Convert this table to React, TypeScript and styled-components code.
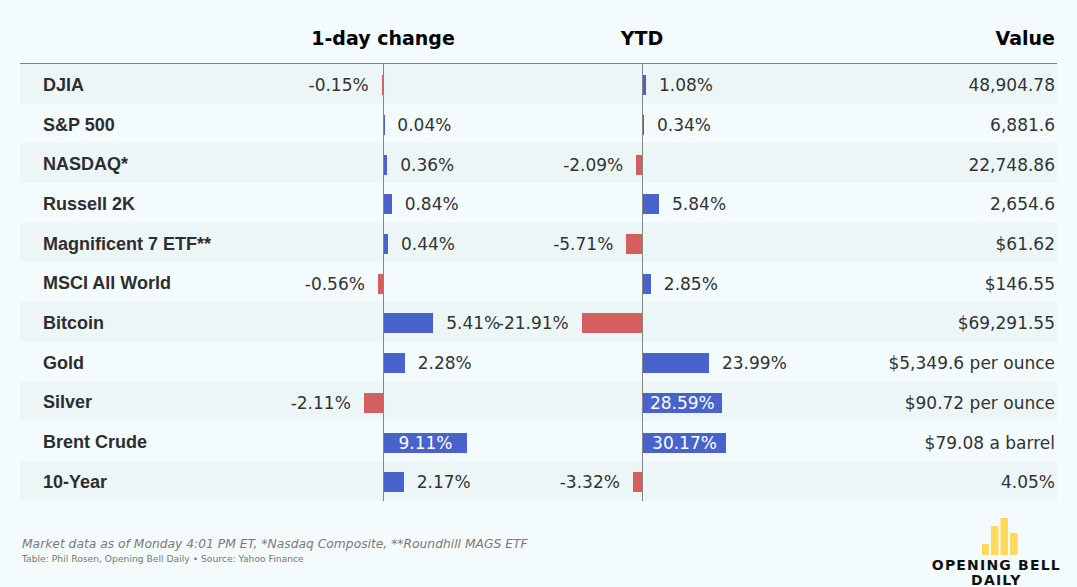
import React from "react";
import styled, { createGlobalStyle } from "styled-components";

const GlobalStyle = createGlobalStyle`
  html, body {
    margin: 0;
    padding: 0;
    background: #f3fbfd;
  }
`;

const COLS = "210px 153px 153px 106px 106px 1fr";
const DAY_SCALE = 9.1;
const YTD_SCALE = 2.75;

const Page = styled.div`
  width: 1077px;
  height: 587px;
  box-sizing: border-box;
  padding: 0 20px;
  overflow: hidden;
`;

const Table = styled.div`
  display: flex;
  flex-direction: column;
`;

const HeaderRow = styled.div`
  display: grid;
  grid-template-columns: ${COLS};
  align-items: center;
  height: 64px;
  box-sizing: border-box;
  padding-top: 12px;
  border-bottom: 1px solid #7e7e7e;
  font-family: "DejaVu Sans", Verdana, sans-serif;
  font-weight: bold;
  font-size: 19px;
  color: #000;
`;

const HeadCell = styled.div<{ $align?: "center" | "right" }>`
  grid-column: ${(p) => (p.$align === "center" ? "span 2" : "span 1")};
  text-align: ${(p) => p.$align || "left"};
  padding-right: ${(p) => (p.$align === "right" ? "2px" : "0")};
`;

const Row = styled.div<{ $striped: boolean }>`
  display: grid;
  grid-template-columns: ${COLS};
  align-items: stretch;
  height: 39.7px;
  box-sizing: border-box;
  padding-top: 3px;
  background: ${(p) => (p.$striped ? "#edf6f7" : "transparent")};
`;

const Name = styled.div`
  display: flex;
  align-items: center;
  padding-left: 23px;
  font-family: "Liberation Sans", Arial, sans-serif;
  font-weight: bold;
  font-size: 18px;
  color: #2e2e2e;
`;

const Num = styled.span<{ $inside?: boolean }>`
  font-family: "DejaVu Sans", Verdana, sans-serif;
  font-size: 17px;
  color: ${(p) => (p.$inside ? "#fff" : "#333")};
  white-space: nowrap;
  flex-shrink: 0;
`;

const NegSide = styled.div`
  display: flex;
  flex-direction: row-reverse;
  align-items: center;
  justify-content: flex-start;
  gap: 13px;
  min-width: 0;
`;

const PosSide = styled.div`
  display: flex;
  align-items: center;
  gap: 13px;
  min-width: 0;
  margin-top: -3px;
  padding-top: 3px;
  border-left: 1px solid #858585;
`;

const Bar = styled.div<{ $neg: boolean }>`
  height: 20px;
  flex-shrink: 0;
  display: flex;
  align-items: center;
  justify-content: center;
  background: ${(p) => (p.$neg ? "#d55e5e" : "#4863cb")};
`;

const Value = styled.div`
  display: flex;
  align-items: center;
  justify-content: flex-end;
  padding-right: 2px;
`;

const Footer = styled.div`
  display: flex;
  justify-content: space-between;
  align-items: flex-start;
`;

const Notes = styled.div`
  padding-top: 35px;
  padding-left: 2px;
  font-family: "DejaVu Sans", Verdana, sans-serif;
  color: #7a7a7a;
`;

const Note = styled.div`
  font-style: italic;
  font-size: 12.3px;
  line-height: 16px;
`;

const Credit = styled.div`
  font-size: 9.2px;
  line-height: 13px;
  color: #777;
`;

const Logo = styled.div`
  display: flex;
  flex-direction: column;
  align-items: center;
  margin-top: 16px;
  margin-right: -4px;
`;

const BarsMark = styled.svg`
  margin-left: 7px;
`;

const LogoText = styled.div`
  font-family: "DejaVu Sans", Verdana, sans-serif;
  font-weight: bold;
  font-size: 14px;
  letter-spacing: 1.2px;
  line-height: 15px;
  color: #111;
  text-align: center;
  margin-top: 3px;
`;

type Item = { name: string; day: number; ytd: number; value: string };

const data: Item[] = [
  { name: "DJIA", day: -0.15, ytd: 1.08, value: "48,904.78" },
  { name: "S&P 500", day: 0.04, ytd: 0.34, value: "6,881.6" },
  { name: "NASDAQ*", day: 0.36, ytd: -2.09, value: "22,748.86" },
  { name: "Russell 2K", day: 0.84, ytd: 5.84, value: "2,654.6" },
  { name: "Magnificent 7 ETF**", day: 0.44, ytd: -5.71, value: "$61.62" },
  { name: "MSCI All World", day: -0.56, ytd: 2.85, value: "$146.55" },
  { name: "Bitcoin", day: 5.41, ytd: -21.91, value: "$69,291.55" },
  { name: "Gold", day: 2.28, ytd: 23.99, value: "$5,349.6 per ounce" },
  { name: "Silver", day: -2.11, ytd: 28.59, value: "$90.72 per ounce" },
  { name: "Brent Crude", day: 9.11, ytd: 30.17, value: "$79.08 a barrel" },
  { name: "10-Year", day: 2.17, ytd: -3.32, value: "4.05%" },
];

function ChartCells({ v, scale }: { v: number; scale: number }) {
  const width = Math.abs(v) * scale;
  const inside = width >= 75;
  const label = `${v.toFixed(2)}%`;
  const bar = (
    <Bar $neg={v < 0} style={{ width }}>
      {inside && <Num $inside>{label}</Num>}
    </Bar>
  );
  const side = (
    <>
      {bar}
      {!inside && <Num>{label}</Num>}
    </>
  );
  return v < 0 ? (
    <>
      <NegSide>{side}</NegSide>
      <PosSide />
    </>
  ) : (
    <>
      <NegSide />
      <PosSide>{side}</PosSide>
    </>
  );
}

function LogoBars() {
  return (
    <BarsMark width="36" height="38" viewBox="0 0 36 38">
      <rect x="0" y="27" width="7" height="11" fill="#ffd95c" />
      <rect x="9" y="9" width="7.5" height="29" fill="#ffd95c" />
      <rect x="18.5" y="1" width="7.5" height="37" fill="#ffd95c" />
      <rect x="28" y="16" width="7.5" height="22" fill="#ffd95c" />
    </BarsMark>
  );
}

export default function App() {
  return (
    <Page>
      <GlobalStyle />
      <Table>
        <HeaderRow>
          <HeadCell />
          <HeadCell $align="center">1-day change</HeadCell>
          <HeadCell $align="center">YTD</HeadCell>
          <HeadCell $align="right">Value</HeadCell>
        </HeaderRow>
        {data.map((d, i) => (
          <Row key={d.name} $striped={i % 2 === 0}>
            <Name>{d.name}</Name>
            <ChartCells v={d.day} scale={DAY_SCALE} />
            <ChartCells v={d.ytd} scale={YTD_SCALE} />
            <Value>
              <Num>{d.value}</Num>
            </Value>
          </Row>
        ))}
      </Table>
      <Footer>
        <Notes>
          <Note>
            Market data as of Monday 4:01 PM ET, *Nasdaq Composite, **Roundhill
            MAGS ETF
          </Note>
          <Credit>
            Table: Phil Rosen, Opening Bell Daily • Source: Yahoo Finance
          </Credit>
        </Notes>
        <Logo>
          <LogoBars />
          <LogoText>
            OPENING BELL
            <br />
            DAILY
          </LogoText>
        </Logo>
      </Footer>
    </Page>
  );
}
